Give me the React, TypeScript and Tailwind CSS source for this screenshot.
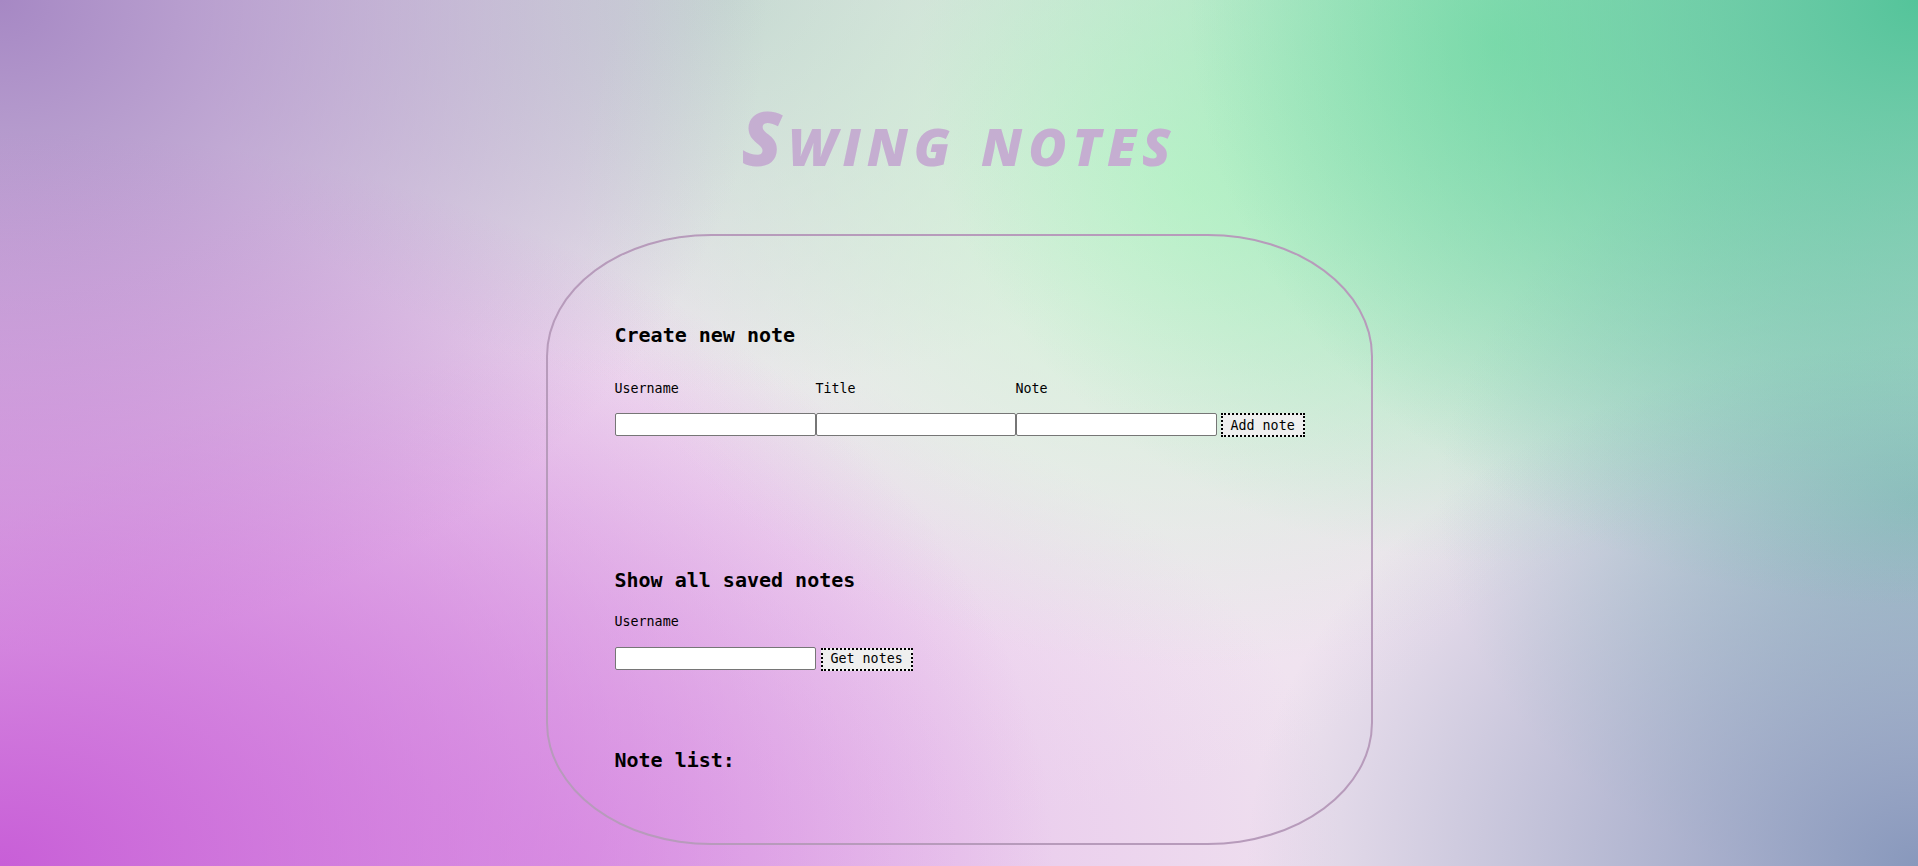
export default function App() {
  return (
    <div className="flex h-[866px] w-full flex-col items-center overflow-hidden bg-[#efe2ef] bg-[image:radial-gradient(55%_85%_at_0%_100%,rgba(198,88,214,0.95),rgba(198,88,214,0)),radial-gradient(38%_70%_at_100%_0%,rgba(84,196,154,1),rgba(84,196,154,0)),radial-gradient(40%_75%_at_0%_0%,rgba(166,136,196,1),rgba(166,136,196,0)),radial-gradient(35%_60%_at_100%_100%,rgba(136,152,188,1),rgba(136,152,188,0)),radial-gradient(25%_45%_at_100%_58%,rgba(140,198,190,0.8),rgba(140,198,190,0)),radial-gradient(30%_60%_at_78%_5%,rgba(140,232,176,0.9),rgba(140,232,176,0)),radial-gradient(32%_55%_at_62%_22%,rgba(204,246,210,0.95),rgba(204,246,210,0)),radial-gradient(28%_45%_at_38%_0%,rgba(192,210,206,0.85),rgba(192,210,206,0)),radial-gradient(40%_60%_at_30%_100%,rgba(226,166,234,0.8),rgba(226,166,234,0)),radial-gradient(30%_40%_at_50%_55%,rgba(244,232,242,0.9),rgba(244,232,242,0))]">
      <h1 className="mt-[101px] font-['Open_Sans',sans-serif] text-[74px] leading-none font-extrabold tracking-[0.08em] text-[#c5aed1] italic [font-variant:small-caps]">
        Swing notes
      </h1>

      <div className="mt-[59px] h-[611px] w-[827px] shrink-0 rounded-[20%] border-2 border-[#b79bbb] pt-[89px] pr-[60px] pl-[67px] font-['DejaVu_Sans_Mono',monospace] text-black">
        <h2 className="text-[20px] leading-none font-bold">Create new note</h2>

        <div className="mt-[37px] flex text-[13.33px] leading-none">
          <label className="w-[201px]">Username</label>
          <label className="w-[200px]">Title</label>
          <label className="w-[201px]">Note</label>
        </div>
        <div className="mt-[18px] flex items-start">
          <input className="h-[23px] w-[201px] shrink-0 rounded-[2px] border border-[#767676] bg-white" />
          <input className="h-[23px] w-[200px] shrink-0 rounded-[2px] border border-[#767676] bg-white" />
          <input className="h-[23px] w-[201px] shrink-0 rounded-[2px] border border-[#767676] bg-white" />
          <button className="ml-1 h-[24px] shrink-0 border-2 border-dotted border-black bg-[#efefef] px-2 text-[13.33px] leading-none whitespace-nowrap">
            Add note
          </button>
        </div>

        <h2 className="mt-[133px] text-[20px] leading-none font-bold">Show all saved notes</h2>
        <div className="mt-[25px] text-[13.33px] leading-none">
          <label>Username</label>
        </div>
        <div className="mt-[18px] flex items-start">
          <input className="h-[23px] w-[201px] shrink-0 rounded-[2px] border border-[#767676] bg-white" />
          <button className="mt-px ml-[5px] h-[23px] shrink-0 border-2 border-dotted border-black bg-[#efefef] px-2 text-[13.33px] leading-none whitespace-nowrap">
            Get notes
          </button>
        </div>

        <h2 className="mt-[79px] text-[20px] leading-none font-bold">Note list:</h2>
      </div>
    </div>
  )
}
